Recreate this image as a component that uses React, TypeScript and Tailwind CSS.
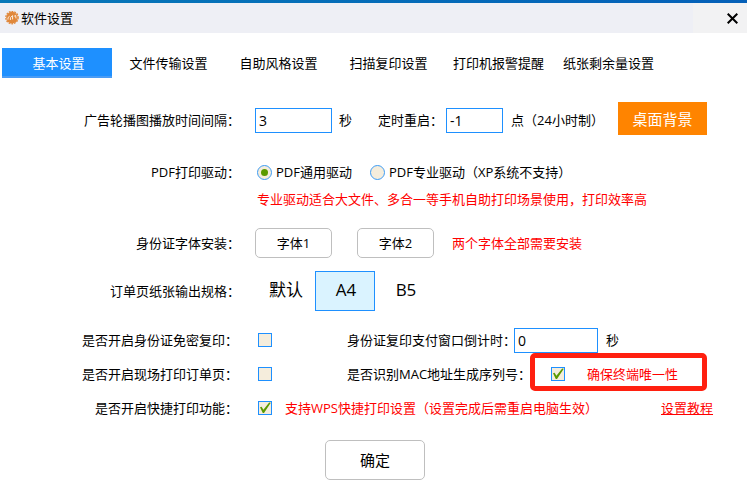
import React, { useState } from 'react';

const tabs = ['基本设置', '文件传输设置', '自助风格设置', '扫描复印设置', '打印机报警提醒', '纸张剩余量设置'];
const paperSizes = ['默认', 'A4', 'B5'];

const Logo = () => (
  <svg viewBox="0 0 14 14" className="h-3.5 w-3.5" aria-hidden="true">
    <circle cx="7" cy="6.6" r="5.8" fill="#e0873a" />
    <circle cx="7" cy="6.6" r="6.2" fill="none" stroke="#e0873a" strokeWidth="1.2" strokeDasharray="1.8 1" />
    <path d="M3 8.6V6.6L4.6 5.2M5.4 9V6.6L7.6 4.6V8.4M9.2 5.2 10.6 4.4 11 7.4" fill="none" stroke="#fbeee2" strokeWidth="1" />
  </svg>
);

type RowProps = { label: string; htmlFor?: string; className?: string; children: React.ReactNode };

const Row = ({ label, htmlFor, className = '', children }: RowProps) => (
  <div className={`flex items-center ${className}`}>
    <label htmlFor={htmlFor} className="w-60 shrink-0 text-right">{label}</label>
    {children}
  </div>
);

// rows of the lower block, all led by a tick box
const CheckRow = ({ label, id, defaultChecked, children }: { label: string; id: string; defaultChecked?: boolean; children: React.ReactNode }) => (
  <div className="flex h-[34px] items-center">
    <label htmlFor={id} className="mr-5 w-[238px] shrink-0 text-right">{label}</label>
    <Check id={id} defaultChecked={defaultChecked} />
    {children}
  </div>
);

const Check = ({ id, defaultChecked = false }: { id: string; defaultChecked?: boolean }) => (
  <span className="relative h-3.5 w-3.5 shrink-0">
    <input
      id={id}
      type="checkbox"
      defaultChecked={defaultChecked}
      className="peer block h-3.5 w-3.5 appearance-none border border-[#1e90ff] bg-[#f5eddc]"
    />
    <svg viewBox="0 0 14 14" className="pointer-events-none absolute inset-0 hidden peer-checked:block" aria-hidden="true">
      <path d="M2 6.2 3.6 5.8 5.4 8.8 11.2 1.6 12.8 1.8 6 12 4.8 12Z" fill="#5a9a00" />
    </svg>
  </span>
);

const TextBox = ({ id, value, className }: { id: string; value: string; className: string }) => (
  <input
    id={id}
    type="text"
    defaultValue={value}
    className={`h-[25px] border border-[#1e90ff] bg-white px-[3px] text-sm outline-none ${className}`}
  />
);

const Radio = ({ label, defaultChecked = false }: { label: string; defaultChecked?: boolean }) => (
  <label className="flex items-center gap-1">
    <span className="relative h-[15px] w-[15px]">
      <input
        type="radio"
        name="driver"
        defaultChecked={defaultChecked}
        className="peer block h-[15px] w-[15px] appearance-none rounded-full border border-[#3d9cf5] bg-[#f5eddc]"
      />
      <span className="pointer-events-none absolute inset-1 hidden rounded-full bg-[#5a9a00] peer-checked:block" />
    </span>
    {label}
  </label>
);

const FontButton = ({ children }: { children: React.ReactNode }) => (
  <button className="h-[30px] w-[77px] rounded-[5px] border border-[#bfbfbf] bg-white">{children}</button>
);

const App: React.FC = () => {
  const [tab, setTab] = useState(0);
  const [size, setSize] = useState('A4');

  return (
    <div className="min-h-screen bg-white font-['Open_Sans','Noto_Sans_CJK_SC',sans-serif] text-[13px] leading-5 text-black">
      <div className="h-[3px] bg-linear-to-r from-[#0878b8] to-[#0560b8]" />
      <header className="flex h-[30px] items-center bg-[#eeeff5] pl-[5px]">
        <Logo />
        <h1 className="ml-0.5">软件设置</h1>
        <button aria-label="关闭" className="ml-auto flex h-full w-[54px] items-center justify-end bg-[#f2f2f3] pr-[9px]">
          <svg viewBox="0 0 11 11" className="h-[11px] w-[11px]" aria-hidden="true">
            <path d="M.7.7 10.3 10.3M10.3.7.7 10.3" stroke="#000" strokeWidth="2" />
          </svg>
        </button>
      </header>

      <nav className="mt-[15px] flex pl-0.5">
        {tabs.map((name, i) => (
          <button
            key={name}
            onClick={() => setTab(i)}
            className={`h-[30px] w-[110px] border-b-2 pt-0.5 pl-[3px] ${tab === i ? 'border-[#4a9cf5] bg-[#1e90ff] text-white' : 'border-transparent'}`}
          >
            {name}
          </button>
        ))}
      </nav>

      <main>
        <Row label="广告轮播图播放时间间隔：" htmlFor="interval" className="mt-6 h-9">
          <TextBox id="interval" value="3" className="ml-[15px] w-[77px]" />
          <span className="ml-[7px]">秒</span>
          <label htmlFor="restart" className="ml-[26px]">定时重启：</label>
          <TextBox id="restart" value="-1" className="ml-[3px] w-[57px]" />
          <span className="ml-2">点（24小时制）</span>
          <button className="ml-3.5 h-[33px] w-[89px] self-start bg-[#ff8400] text-[15px] text-white">桌面背景</button>
        </Row>

        <Row label="PDF打印驱动：" className="mt-6">
          <div className="ml-[17px] flex gap-[18px]">
            <Radio label="PDF通用驱动" defaultChecked />
            <Radio label="PDF专业驱动（XP系统不支持）" />
          </div>
        </Row>
        <p className="mt-[7px] pl-[257px] text-[#ff0000]">专业驱动适合大文件、多合一等手机自助打印场景使用，打印效率高</p>

        <Row label="身份证字体安装：" className="mt-[19px]">
          <div className="ml-[15px] flex gap-[25px]">
            <FontButton>字体1</FontButton>
            <FontButton>字体2</FontButton>
          </div>
          <span className="ml-[18px] text-[#ff0000]">两个字体全部需要安装</span>
        </Row>

        <Row label="订单页纸张输出规格：" className="mt-[13px]">
          <div className="ml-[15px] flex">
            {paperSizes.map(name => (
              <button
                key={name}
                onClick={() => setSize(name)}
                className={`h-10 w-[60px] border pb-0.5 pl-0.5 text-[17px] ${size === name ? 'border-[#1e90ff] bg-[#daf3ff]' : 'border-transparent'}`}
              >
                {name}
              </button>
            ))}
          </div>
        </Row>

        <div className="mt-3">
          <CheckRow label="是否开启身份证免密复印：" id="secretFree">
            <label htmlFor="countdown" className="ml-[75px] w-[167px] whitespace-nowrap">身份证复印支付窗口倒计时：</label>
            <TextBox id="countdown" value="0" className="w-[84px]" />
            <span className="ml-2">秒</span>
          </CheckRow>

          <CheckRow label="是否开启现场打印订单页：" id="orderPage">
            <label htmlFor="mac" className="ml-[75px] w-[183px] whitespace-nowrap">是否识别MAC地址生成序列号：</label>
            <div className="relative flex h-[34px] w-[177px] items-center pl-[21px]">
              <span className="pointer-events-none absolute inset-x-0 -top-1 h-[38px] rounded-[5px] border-5 border-[#ff2010]" />
              <Check id="mac" defaultChecked />
              <span className="ml-[22px] text-[#ff0000]">确保终端唯一性</span>
            </div>
          </CheckRow>

          <CheckRow label="是否开启快捷打印功能：" id="quickPrint" defaultChecked>
            <span className="ml-[13px] w-[376px] text-[#ff0000]">支持WPS快捷打印设置（设置完成后需重启电脑生效）</span>
            <a href="#tutorial" className="text-[#ff0000] underline">设置教程</a>
          </CheckRow>
        </div>

        <div className="mt-[15px] flex justify-center pl-[3px]">
          <button className="h-10 w-[100px] rounded-[5px] border border-[#bfbfbf] bg-white text-[15px]">确定</button>
        </div>
      </main>
    </div>
  );
};

export default App;
